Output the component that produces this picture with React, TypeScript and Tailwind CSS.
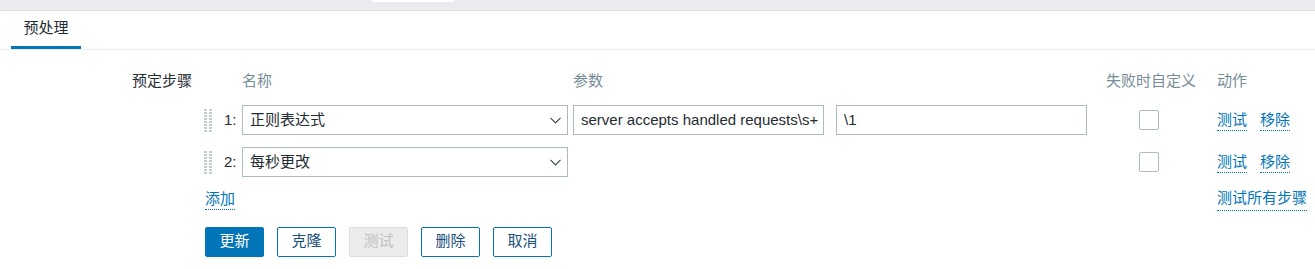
import React from "react";

const FONT = { fontFamily: '"Liberation Sans", Arial, "Noto Sans CJK SC", sans-serif' };

type Step = { n: number; name: string; params?: [string, string] };

const STEPS: Step[] = [
  { n: 1, name: "正则表达式", params: ["server accepts handled requests\\s+", "\\1"] },
  { n: 2, name: "每秒更改" },
];

function DragHandle() {
  const dots = [];
  for (let r = 0; r < 8; r++) {
    dots.push(<rect key={`a${r}`} x={0} y={r * 3} width={3} height={2} />);
    dots.push(<rect key={`b${r}`} x={5} y={r * 3} width={3} height={2} />);
  }
  return (
    <svg width="8" height="23" viewBox="0 0 8 23" className="fill-[#c5ced3]">
      {dots}
    </svg>
  );
}

function Chevron() {
  return (
    <svg width="11" height="7" viewBox="0 0 11 7" className="stroke-[#3b4a52]" fill="none">
      <path d="M0.5 0.8 L5.5 5.8 L10.5 0.8" strokeWidth="1.2" />
    </svg>
  );
}

function Link({ children }: { children: React.ReactNode }) {
  return (
    <span className="inline-block border-b border-dotted border-[#0275b8] leading-[20px] text-[#0275b8]">
      {children}
    </span>
  );
}

export default function App() {
  return (
    <div style={FONT} className="min-h-screen bg-white text-[15px] text-[#1f2c33]">
      <div className="flex h-[11px] border-b border-[#dde1e4] bg-[#e9ebee]">
        <div className="ml-[372px] h-[2px] w-[82px] rounded-b-[2px] bg-white" />
      </div>

      <div className="flex h-[39px] border-b border-[#ebeef0]">
        <div className="ml-[11px] flex h-[38px] w-[70px] items-center justify-center border-b-[3px] border-[#0275b8] pt-[0px]">
          预处理
        </div>
      </div>

      <div className="flex pt-[22px]">
        <div className="w-[192px] text-right leading-[18px]">预定步骤</div>

        <div className="ml-[12px]">
          <div className="flex h-[18px] items-center leading-[18px] text-[#768d99]">
            <div className="w-[38px]" />
            <div className="w-[331px]">名称</div>
            <div className="w-[533px]">参数</div>
            <div className="w-[111px]">失败时自定义</div>
            <div>动作</div>
          </div>

          <div className="mt-[15px] flex flex-col gap-[12px]">
            {STEPS.map((s) => (
              <div key={s.n} className="flex h-[30px] items-center">
                <div className="w-[20px]">
                  <DragHandle />
                </div>
                <div className="w-[18px]">{s.n}:</div>
                <div className="flex h-[30px] w-[326px] items-center justify-between border border-[#acbbc2] pl-[7px] pr-[6px]">
                  <span>{s.name}</span>
                  <Chevron />
                </div>
                {s.params ? (
                  <>
                    <div className="ml-[5px] flex h-[30px] w-[251px] items-center border border-[#acbbc2] px-[7px] whitespace-nowrap overflow-hidden">
                      {s.params[0]}
                    </div>
                    <div className="ml-[12px] flex h-[30px] w-[251px] items-center border border-[#acbbc2] px-[7px]">
                      {s.params[1]}
                    </div>
                  </>
                ) : (
                  <div className="w-[519px]" />
                )}
                <div className="ml-[52px] h-[20px] w-[20px] rounded-[2px] border border-[#acbbc2]" />
                <div className="ml-[58px] flex gap-[13px]">
                  <Link>测试</Link>
                  <Link>移除</Link>
                </div>
              </div>
            ))}
          </div>

          <div className="mt-[11px] flex">
            <div className="w-[1013px] pl-[1px]">
              <Link>添加</Link>
            </div>
            <Link>测试所有步骤</Link>
          </div>

          <div className="mt-[16px] flex gap-[13px] pl-[1px]">
            <button className="h-[30px] w-[59px] rounded-[2px] border border-[#0275b8] bg-[#0275b8] text-white">
              更新
            </button>
            <button className="h-[30px] w-[59px] rounded-[2px] border border-[#0275b8] bg-white text-[#1a4f7c]">
              克隆
            </button>
            <button className="h-[30px] w-[59px] rounded-[2px] border border-[#dcdfe1] bg-[#ebebeb] text-[#bcc1c4]">
              测试
            </button>
            <button className="h-[30px] w-[59px] rounded-[2px] border border-[#0275b8] bg-white text-[#1a4f7c]">
              删除
            </button>
            <button className="h-[30px] w-[59px] rounded-[2px] border border-[#0275b8] bg-white text-[#1a4f7c]">
              取消
            </button>
          </div>
        </div>
      </div>
    </div>
  );
}
